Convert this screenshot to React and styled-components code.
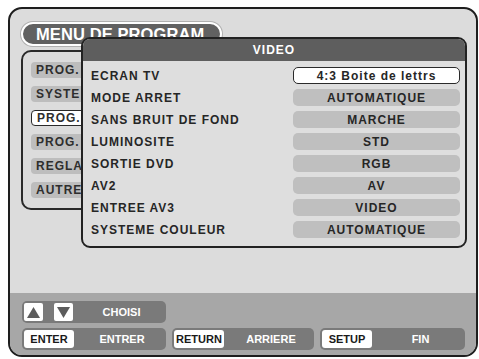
import React from "react";
import styled, { createGlobalStyle } from "styled-components";

const GlobalStyle = createGlobalStyle`
  html, body {
    margin: 0;
    padding: 0;
    background: #ffffff;
  }
  * {
    box-sizing: border-box;
  }
`;

const Screen = styled.div`
  width: 470px;
  height: 350px;
  margin: 7px 0 0 8px;
  border: 2px solid #1e1e1e;
  border-radius: 14px;
  background-color: #dcdcdc;
  overflow: hidden;
  display: flex;
  flex-direction: column;
  font-family: "Liberation Sans", Arial, sans-serif;
  font-weight: 700;
`;

const Main = styled.div`
  flex: 1;
  position: relative;
  padding: 13px 0 0 11px;
`;

const TitlePill = styled.div`
  display: inline-flex;
  align-items: center;
  width: 201px;
  height: 24px;
  padding-left: 13px;
  border: 2px solid #ffffff;
  border-radius: 12px;
  background-color: #616161;
  color: #ffffff;
  font-size: 16.5px;
  letter-spacing: 0.1px;
  box-shadow: 0 0 0 1px #b0b0b0;
`;

// menu underneath the video panel
const MenuPanel = styled.div`
  width: 200px;
  margin-top: 4px;
  padding: 10px 0 10px 8px;
  border: 2px solid #2a2a2a;
  border-radius: 10px;
  display: flex;
  flex-direction: column;
  gap: 8px;
`;

const MenuItem = styled.div`
  width: 90px;
  height: 16px;
  padding-left: 5px;
  display: flex;
  align-items: center;
  border-radius: 4px;
  font-size: 12px;
  letter-spacing: 1px;
  color: #2e2e2e;
  background-color: ${(p) => (p.$active ? "#ffffff" : "#bdbdbd")};
  border: ${(p) => (p.$active ? "1.5px solid #2a2a2a" : "none")};
`;

const VideoPanel = styled.div`
  position: absolute;
  left: 71px;
  top: 28px;
  width: 386px;
  height: 211px;
  border: 2px solid #222222;
  border-radius: 9px;
  background-color: #dedede;
  overflow: hidden;
`;

const PanelHeader = styled.div`
  height: 22px;
  display: flex;
  align-items: center;
  justify-content: center;
  background-color: #5e5e5e;
  color: #ffffff;
  font-size: 12px;
  letter-spacing: 1px;
`;

const Rows = styled.div`
  display: grid;
  grid-template-columns: 1fr 167px;
  grid-auto-rows: 17px;
  row-gap: 5px;
  padding: 6px 5px 8px 8px;
`;

const Label = styled.div`
  display: flex;
  align-items: center;
  font-size: 12px;
  letter-spacing: 1px;
  color: #262626;
`;

const Value = styled.div`
  display: flex;
  align-items: center;
  justify-content: center;
  border-radius: 5px;
  font-size: 12px;
  letter-spacing: 1px;
  color: #262626;
  background-color: ${(p) => (p.$active ? "#ffffff" : "#bfbfbf")};
  border: ${(p) => (p.$active ? "1.5px solid #2a2a2a" : "none")};
`;

const Bottom = styled.div`
  height: 62px;
  flex-shrink: 0;
  background-color: #a7a7a7;
  padding: 8px 0 0 12px;
  display: flex;
  flex-direction: column;
  gap: 5px;
`;

const BarRow = styled.div`
  display: flex;
  gap: 6px;
`;

const Group = styled.div`
  width: ${(p) => p.$w}px;
  height: 22px;
  padding: 2px;
  display: flex;
  align-items: center;
  border-radius: 5px;
  background-color: #7a7a7a;
`;

const Key = styled.div`
  width: 50px;
  height: 18px;
  display: flex;
  align-items: center;
  justify-content: center;
  border-radius: 3px;
  background-color: #ffffff;
  color: #1a1a1a;
  font-size: 11px;
`;

const ArrowKey = styled.div`
  width: 19px;
  height: 18px;
  margin-right: ${(p) => p.$mr || 0}px;
  display: flex;
  align-items: center;
  justify-content: center;
  border-radius: 2px;
  background-color: #ffffff;
`;

const GroupText = styled.div`
  flex: 1;
  text-align: center;
  padding-left: 6px;
  color: #ffffff;
  font-size: 11px;
`;

const menuItems = ["PROG.", "SYSTE", "PROG.", "PROG.", "REGLA", "AUTRE"];

const rows = [
  ["ECRAN TV", "4:3 Boite de lettrs"],
  ["MODE ARRET", "AUTOMATIQUE"],
  ["SANS BRUIT DE FOND", "MARCHE"],
  ["LUMINOSITE", "STD"],
  ["SORTIE DVD", "RGB"],
  ["AV2", "AV"],
  ["ENTREE AV3", "VIDEO"],
  ["SYSTEME COULEUR", "AUTOMATIQUE"],
];

const Triangle = ({ down }) => (
  <svg width="13" height="11" viewBox="0 0 13 11">
    <polygon
      points={down ? "0,0 13,0 6.5,11" : "0,11 13,11 6.5,0"}
      fill="#5c5c5c"
    />
  </svg>
);

export default function App() {
  return (
    <>
      <GlobalStyle />
      <Screen>
        <Main>
          <TitlePill>MENU DE PROGRAM</TitlePill>
          <MenuPanel>
            {menuItems.map((item, i) => (
              <MenuItem key={i} $active={i === 2}>
                {item}
              </MenuItem>
            ))}
          </MenuPanel>

          <VideoPanel>
            <PanelHeader>VIDEO</PanelHeader>
            <Rows>
              {rows.map(([label, value], i) => (
                <React.Fragment key={label}>
                  <Label>{label}</Label>
                  <Value $active={i === 0}>{value}</Value>
                </React.Fragment>
              ))}
            </Rows>
          </VideoPanel>
        </Main>

        <Bottom>
          <BarRow>
            <Group $w={144}>
              <ArrowKey $mr={11}>
                <Triangle />
              </ArrowKey>
              <ArrowKey>
                <Triangle down />
              </ArrowKey>
              <GroupText>CHOISI</GroupText>
            </Group>
          </BarRow>
          <BarRow>
            <Group $w={144}>
              <Key>ENTER</Key>
              <GroupText>ENTRER</GroupText>
            </Group>
            <Group $w={142}>
              <Key>RETURN</Key>
              <GroupText>ARRIERE</GroupText>
            </Group>
            <Group $w={145}>
              <Key>SETUP</Key>
              <GroupText>FIN</GroupText>
            </Group>
          </BarRow>
        </Bottom>
      </Screen>
    </>
  );
}
